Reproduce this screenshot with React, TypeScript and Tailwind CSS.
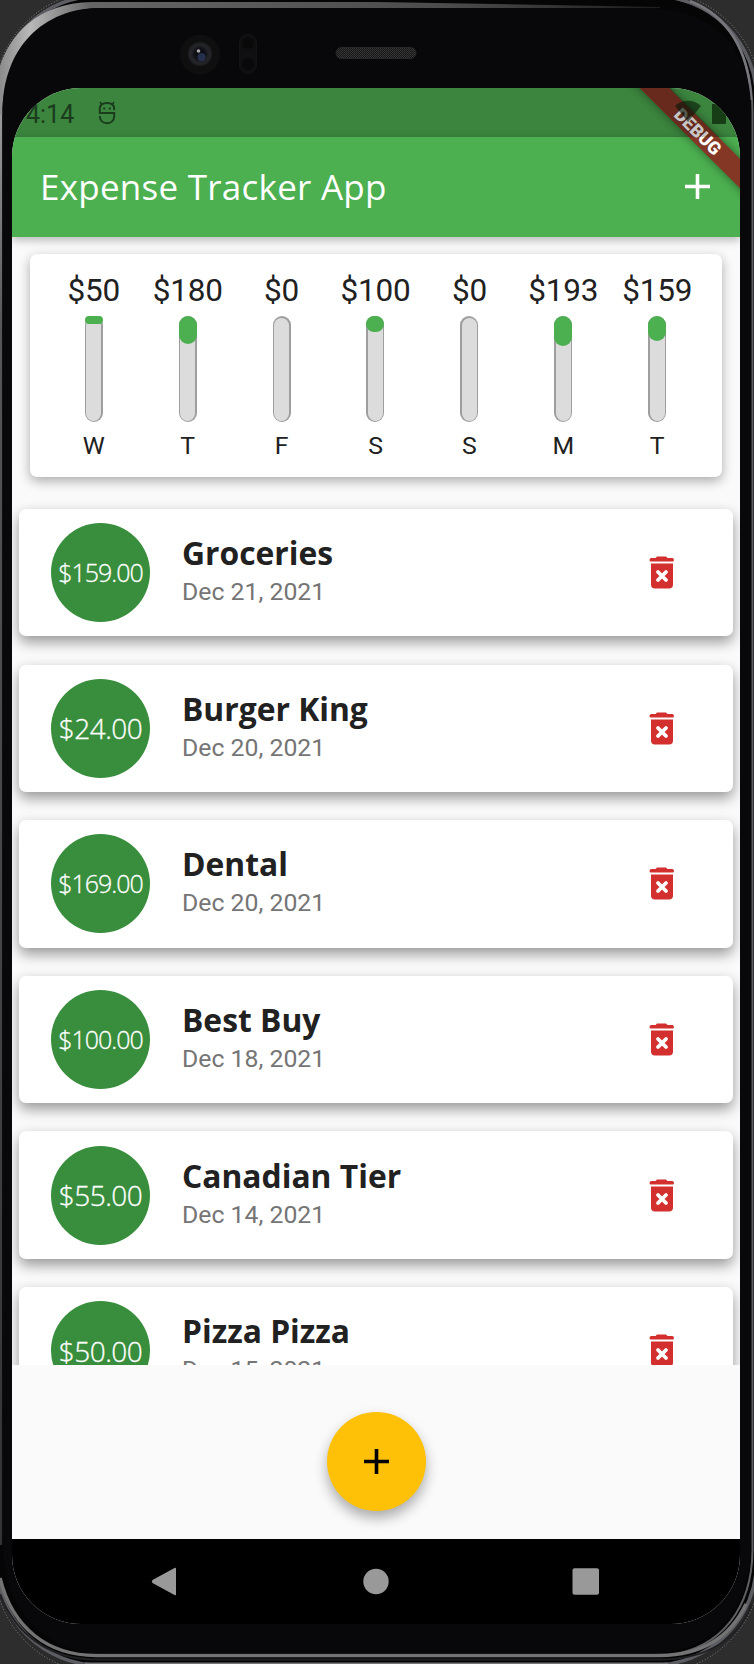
import React from "react";

type Day = { label: string; amount: string; fill: number };
type Expense = { amount: string; title: string; date: string; size: string };

const days: Day[] = [
  { label: "W", amount: "$50", fill: 8 },
  { label: "T", amount: "$180", fill: 28 },
  { label: "F", amount: "$0", fill: 0 },
  { label: "S", amount: "$100", fill: 16 },
  { label: "S", amount: "$0", fill: 0 },
  { label: "M", amount: "$193", fill: 30 },
  { label: "T", amount: "$159", fill: 25 },
];

const long = "text-[25px] tracking-[-1.000px]";
const short = "text-[28px] tracking-[-0.500px]";

const expenses: Expense[] = [
  { amount: "$159.00", title: "Groceries", date: "Dec 21, 2021", size: long },
  { amount: "$24.00", title: "Burger King", date: "Dec 20, 2021", size: short },
  { amount: "$169.00", title: "Dental", date: "Dec 20, 2021", size: long },
  { amount: "$100.00", title: "Best Buy", date: "Dec 18, 2021", size: long },
  { amount: "$55.00", title: "Canadian Tier", date: "Dec 14, 2021", size: short },
  { amount: "$50.00", title: "Pizza Pizza", date: "Dec 15, 2021", size: short },
];

function PhoneFrame() {
  return (
    <svg className="absolute inset-0" width="754" height="1664" viewBox="0 0 754 1664">
      <defs>
        <linearGradient id="rimTop" gradientUnits="userSpaceOnUse" x1="0" y1="0" x2="754" y2="0">
          <stop offset="0" stopColor="#8c8c8c" />
          <stop offset="0.04" stopColor="#b8b8b8" />
          <stop offset="0.12" stopColor="#666565" />
          <stop offset="0.6" stopColor="#4c4b4b" />
          <stop offset="0.88" stopColor="#1c1c1d" />
          <stop offset="1" stopColor="#0c0c0d" />
        </linearGradient>
        <linearGradient id="side" gradientUnits="userSpaceOnUse" x1="0" y1="115" x2="0" y2="1545">
          <stop offset="0" stopColor="#9a9a9a" />
          <stop offset="0.15" stopColor="#55565a" />
          <stop offset="1" stopColor="#333336" />
        </linearGradient>
        <radialGradient id="lens">
          <stop offset="0" stopColor="#090a10" />
          <stop offset="0.45" stopColor="#101117" />
          <stop offset="0.75" stopColor="#252629" />
          <stop offset="1" stopColor="#1d1d20" />
        </radialGradient>
        <pattern id="mesh" width="2" height="2" patternUnits="userSpaceOnUse">
          <rect width="2" height="2" fill="#191919" />
          <rect width="1" height="1" fill="#363636" />
          <rect x="1" y="1" width="1" height="1" fill="#303030" />
        </pattern>
      </defs>
      <rect width="754" height="1664" fill="#2d2d2d" />
      <rect x="-6" y="-9" width="767" height="1682" rx="108" fill="#2a2a2b" stroke="#8a8a8c" strokeWidth="1" strokeDasharray="1 2" />
      <rect x="-3.500" y="-4" width="760" height="1669" rx="103" fill="#050506" stroke="#5c5d62" strokeWidth="3.500" />
      <path d="M0 115V66C10 36 36 3 92 2H377L660 7V8H100C48 9 3 46 2.500 115Z" fill="url(#rimTop)" />
      <rect x="0" y="115" width="2.200" height="1430" fill="url(#side)" />
      <path d="M680 0C724 10 752 48 752.500 112V1550C752 1608 722 1648 668 1655.500" fill="none" stroke="#5f5f63" strokeWidth="2" />
      <path d="M690 1C727 15 749 50 751 100" fill="none" stroke="#77777d" strokeWidth="2.500" />
      <path d="M0 1578C12 1628 48 1655.500 96 1655.500H660C702 1655 730 1638 746 1604" fill="none" stroke="#737373" strokeWidth="3.500" />
      <path d="M0 1594C15 1633 48 1659.500 96 1659.500H664C708 1658 738 1639 752 1604" fill="none" stroke="#202023" strokeWidth="2" />
      <path d="M85 1663.300H668" stroke="#77777a" strokeWidth="1.500" />
      <path d="M100 8H650C710 9 751 45 751 110V1545C751 1613 710 1653 650 1653.500H100C48 1653 2.500 1613 2.500 1540V110C3 48 43 8 100 8Z" fill="#08080a" />
      <circle cx="200" cy="54.500" r="20" fill="#0f0f10" />
      <circle cx="200" cy="54" r="12" fill="url(#lens)" />
      <circle cx="201.500" cy="57" r="4" fill="#303d66" opacity=".7" />
      <circle cx="198.500" cy="51" r="1.800" fill="#a8a8ad" />
      <rect x="239.500" y="34.500" width="17" height="39" rx="8.500" fill="#0f0f11" stroke="#141416" />
      <circle cx="248" cy="43" r="6" fill="#09090a" />
      <circle cx="248" cy="64" r="6" fill="#09090a" />
      <rect x="336" y="47.500" width="80" height="11" rx="5.500" fill="url(#mesh)" stroke="#272727" />
    </svg>
  );
}

function StatusBar() {
  return (
    <div className="flex h-[49px] shrink-0 items-center bg-[#3b853e] pl-[14px] text-[#1a3b1c]">
      <span className="pt-[3px] font-[Roboto] text-[25px] leading-none">4:14</span>
      <svg className="ml-[24px]" width="18" height="24" viewBox="0 0 18 24" fill="none" stroke="currentColor" strokeWidth="2">
        <path d="M16.200 9V7.500C16 3.500 12.500 2 9 2S2 3.500 1.800 7.500V12H16.200V15.500C16 19.500 13 22.200 9 22.200S2 19.500 1.800 15.500V15" />
        <path d="M4 4L2 1M14 4L16 1" strokeWidth="1.500" />
        <path d="M5.200 7.500H7.200M10.800 7.500H12.800" />
      </svg>
    </div>
  );
}

function AppBar() {
  return (
    <header className="relative z-10 flex h-[99.500px] shrink-0 items-center justify-between bg-[#4caf50] pr-[30px] pl-[28px] text-white shadow-[0_3px_9px_rgba(0,0,0,0.28)]">
      <h1 className="font-['Open_Sans'] text-[35px] leading-none font-normal tracking-[0.250px] whitespace-nowrap">Expense Tracker App</h1>
      <PlusIcon />
    </header>
  );
}

function PlusIcon() {
  return (
    <svg width="25" height="25" viewBox="0 0 25 25" fill="currentColor">
      <path d="M10.700 0H14.300V10.700H25V14.300H14.300V25H10.700V14.300H0V10.700H10.700Z" />
    </svg>
  );
}

function DebugBanner() {
  return (
    <div className="pointer-events-none absolute top-0 right-0 z-20 h-[140px] w-[140px] overflow-hidden">
      <div className="absolute top-[31.500px] left-[2px] flex h-[21px] w-[190px] rotate-45 items-center justify-center bg-[#843725] shadow-[0_0_10px_rgba(0,0,0,0.45)]">
        <span className="ml-[3px] font-[Roboto] text-[18px] leading-none font-black text-white">DEBUG</span>
      </div>
      <svg className="absolute top-0 right-0" width="140" height="49" viewBox="0 0 140 49">
        <path d="M75 18C82 11 94 11 101 18L88 34Z" fill="#0b1c0c" opacity=".62" />
        <path d="M112 16H126V35Q126 36 125 36H113Q112 36 112 35Z" fill="#12300f" opacity=".85" />
        <path d="M40 0H70L119 49H89Z" fill="#000" opacity=".22" />
      </svg>
    </div>
  );
}

function Chart() {
  return (
    <section className="mx-[18px] mt-[17.500px] flex h-[223px] shrink-0 justify-center rounded-[7px] bg-white pt-[21px] pr-px font-[Roboto] text-[#212121] shadow-[0_4px_12px_rgba(0,0,0,0.32)]">
      {days.map((day, i) => (
        <div key={i} className="flex w-[93.900px] flex-col items-center">
          <span className="text-[31.500px] leading-[32px] tracking-[-0.200px]">{day.amount}</span>
          <div className="mt-[9px] h-[106px] w-[18px] rounded-[9px] bg-[#9e9e9e] p-[1.500px]">
            <div className="h-full rounded-[8px] bg-[#dcdcdc]">
              <div className="relative -top-[1.500px] -mx-[1.500px] rounded-[9px] bg-[#4caf50]" style={{ height: day.fill }} />
            </div>
          </div>
          <span className="mt-[11px] text-[24.800px] leading-[25px]">{day.label}</span>
        </div>
      ))}
    </section>
  );
}

function TrashIcon() {
  return (
    <svg width="26" height="33" viewBox="0 0 26 33">
      <path d="M2 2H6.500L8 .5H17L18.500 2H23.500Q25 2.500 25 4T23.500 5.500H2Q.5 5.500 .5 4T2 2Z" fill="#d32f2f" />
      <path d="M2 7.500H24V28.500Q24 32.500 20 32.500H6Q2 32.500 2 28.500Z" fill="#d32f2f" />
      <path d="M9 16L17 24M17 16L9 24" stroke="#fff" strokeWidth="3.800" strokeLinecap="round" />
    </svg>
  );
}

function ExpenseCard({ item }: { item: Expense }) {
  return (
    <article className="mx-[7px] flex h-[127.400px] shrink-0 items-center rounded-[7px] bg-white pr-[58px] pl-[32px] shadow-[0_6px_14px_rgba(0,0,0,0.4)]">
      <div className="flex h-[99px] w-[99px] shrink-0 items-center justify-center rounded-full bg-[#388e3c] text-white">
        <span className={`font-['Open_Sans'] font-light whitespace-nowrap [-webkit-text-stroke:0.300px_white] ${item.size}`}>{item.amount}</span>
      </div>
      <div className="-mt-[6px] ml-[32px] flex flex-1 flex-col whitespace-nowrap">
        <h2 className="font-['Open_Sans'] text-[31.800px] leading-[41px] font-bold text-[#212121]">{item.title}</h2>
        <p className="mt-[4px] font-[Roboto] text-[24.800px] leading-[30px] text-[#757575]">{item.date}</p>
      </div>
      <TrashIcon />
    </article>
  );
}

function NavBar() {
  return (
    <nav className="h-[85px] shrink-0 bg-black">
      <svg width="728" height="85" viewBox="0 0 728 85" fill="#999">
        <path d="M162.500 29Q164 28 164 30V55Q164 57 162.500 56L140.500 44Q139 42.500 140.500 41Z" />
        <circle cx="364" cy="42.500" r="12.700" />
        <rect x="560.500" y="29.300" width="26.500" height="26.500" rx="2" />
      </svg>
    </nav>
  );
}

export default function App() {
  return (
    <div className="relative h-[1664px] w-[754px] overflow-hidden pt-[88px] pl-[12px]">
      <PhoneFrame />
      <main className="relative flex h-[1536px] w-[728px] flex-col overflow-hidden rounded-[69px] bg-[#fafafa]">
        <StatusBar />
        <AppBar />
        <Chart />
        <div className="mt-[19px] flex h-[869px] shrink-0 flex-col gap-[28.200px] overflow-hidden pt-[13px]">
          {expenses.map((item) => (
            <ExpenseCard key={item.title} item={item} />
          ))}
        </div>
        <div className="flex flex-1 justify-center pt-[47px]">
          <button className="flex h-[99px] w-[99px] items-center justify-center rounded-full bg-[#ffc107] text-black shadow-[0_7px_13px_rgba(0,0,0,0.32)]">
            <PlusIcon />
          </button>
        </div>
        <NavBar />
        <DebugBanner />
      </main>
    </div>
  );
}
